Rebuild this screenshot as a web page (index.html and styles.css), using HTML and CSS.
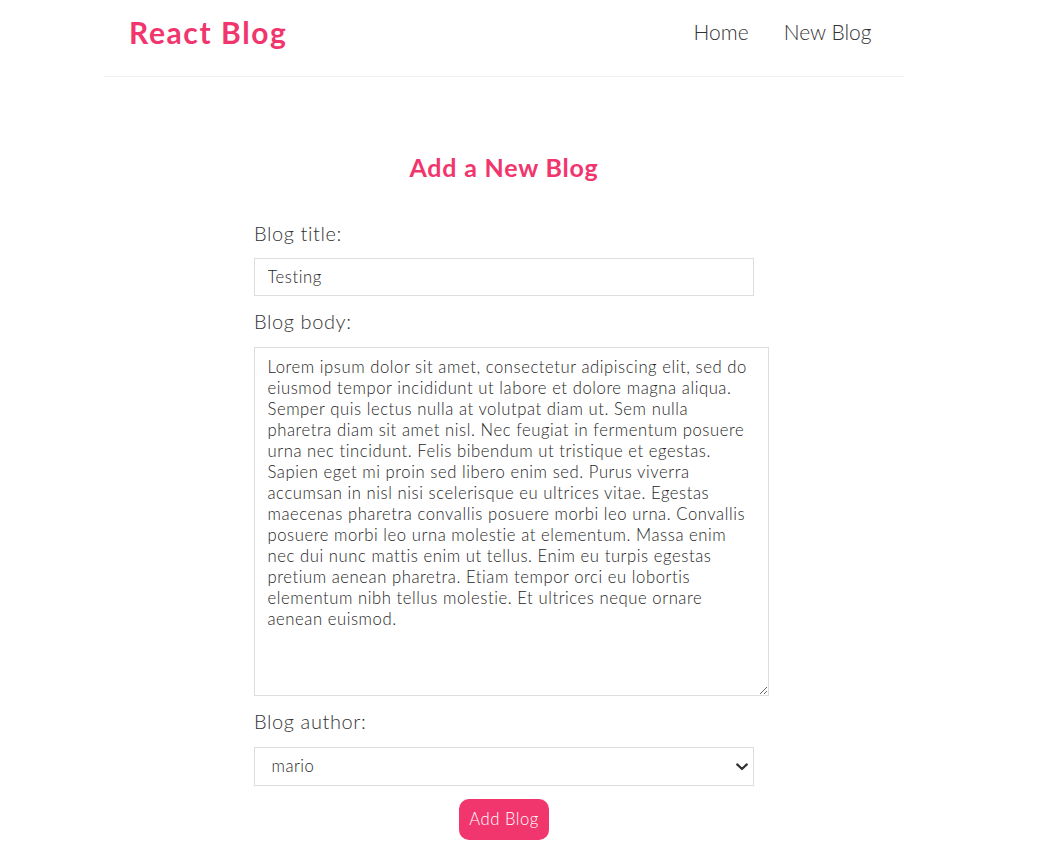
FILE: index.html
```html
<!DOCTYPE html>
<html lang="en">
<head>
<meta charset="utf-8">
<title>React Blog</title>
<link rel="stylesheet" href="styles.css">
</head>
<body>
<div class="app">
  <nav class="navbar">
    <h1 class="brand">React Blog</h1>
    <div class="links">
      <a href="#">Home</a>
      <a href="#">New Blog</a>
    </div>
  </nav>
  <div class="content">
    <div class="create">
      <h2 class="create-title">Add a New Blog</h2>
      <form>
        <label class="field-label">Blog title:</label>
        <input class="field title-field" type="text" value="Testing">
        <label class="field-label">Blog body:</label>
        <textarea class="field body-field" wrap="off">Lorem ipsum dolor sit amet, consectetur adipiscing elit, sed do
eiusmod tempor incididunt ut labore et dolore magna aliqua.
Semper quis lectus nulla at volutpat diam ut. Sem nulla
pharetra diam sit amet nisl. Nec feugiat in fermentum posuere
urna nec tincidunt. Felis bibendum ut tristique et egestas.
Sapien eget mi proin sed libero enim sed. Purus viverra
accumsan in nisl nisi scelerisque eu ultrices vitae. Egestas
maecenas pharetra convallis posuere morbi leo urna. Convallis
posuere morbi leo urna molestie at elementum. Massa enim
nec dui nunc mattis enim ut tellus. Enim eu turpis egestas
pretium aenean pharetra. Etiam tempor orci eu lobortis
elementum nibh tellus molestie. Et ultrices neque ornare
aenean euismod.</textarea>
        <label class="field-label">Blog author:</label>
        <div class="select-wrap">
          <select class="field select-field">
            <option value="mario">mario</option>
            <option value="yoshi">yoshi</option>
          </select>
          <svg class="chevron" width="12" height="8" viewBox="0 0 12 8" aria-hidden="true"><path d="M1.2 1.4 L6 6 L10.8 1.4" fill="none" stroke="#333" stroke-width="2.2" stroke-linecap="round" stroke-linejoin="round"/></svg>
        </div>
        <button class="add-btn" type="button">Add Blog</button>
      </form>
    </div>
  </div>
</div>
</body>
</html>
```

FILE: styles.css
```css
* {
  margin: 0;
  font-family: "Lato", "Open Sans", sans-serif;
  color: #333;
}

body {
  margin: 0;
  background: #fff;
}

.app {
  width: 1008px;
}

.navbar {
  box-sizing: border-box;
  width: 800px;
  height: 77px;
  margin: 0 auto;
  padding: 0 25px 12px;
  display: flex;
  align-items: center;
  border-bottom: 1px solid #f2f2f2;
}

.brand {
  font-size: 30px;
  letter-spacing: 1.6px;
  font-weight: 700;
  color: #f1356d;
  line-height: 40px;
}

.links {
  margin-left: auto;
  display: flex;
}

.links a {
  margin-left: 20px;
  padding: 0 7.5px;
  text-decoration: none;
  font-size: 21px;
  font-weight: 300;
  line-height: 26px;
}

.content {
  padding: 75px 0 0;
}

.create {
  width: 500px;
  margin: 0 auto;
  text-align: center;
}

.create-title {
  font-size: 25px;
  letter-spacing: 0.8px;
  line-height: 31px;
  font-weight: 700;
  color: #f1356d;
  margin-bottom: 37.5px;
}

.field-label {
  display: block;
  text-align: left;
  font-size: 20px;
  font-weight: 300;
  letter-spacing: 0.6px;
  line-height: 25px;
}

.field {
  display: block;
  box-sizing: border-box;
  width: 100%;
  margin: 12.5px 0;
  padding: 7.5px 12.5px;
  border: 1px solid #ddd;
  font-size: 16.67px;
  font-weight: 300;
  color: #262626;
  line-height: 21px;
  background: #fff;
  border-radius: 0;
  outline: none;
}

.title-field {
  letter-spacing: 0.55px;
}

.body-field {
  width: 515px;
  height: 349px;
  margin-top: 13.5px;
  padding-top: 9px;
  overflow: hidden;
  white-space: pre;
  letter-spacing: 0.56px;
  resize: both;
}

.select-wrap {
  position: relative;
  margin: 13.5px 0 12.5px;
}

.select-field {
  height: 39px;
  margin: 0;
  padding-left: 16.5px;
  letter-spacing: 0.5px;
  -webkit-appearance: none;
  appearance: none;
}

.chevron {
  position: absolute;
  right: 6px;
  top: 16px;
  pointer-events: none;
}

.add-btn {
  background: #f1356d;
  color: #fff;
  border: 0;
  padding: 10px;
  border-radius: 10px;
  font-size: 16.67px;
  font-weight: 300;
  letter-spacing: 0.5px;
  line-height: 21px;
  cursor: pointer;
}
```
